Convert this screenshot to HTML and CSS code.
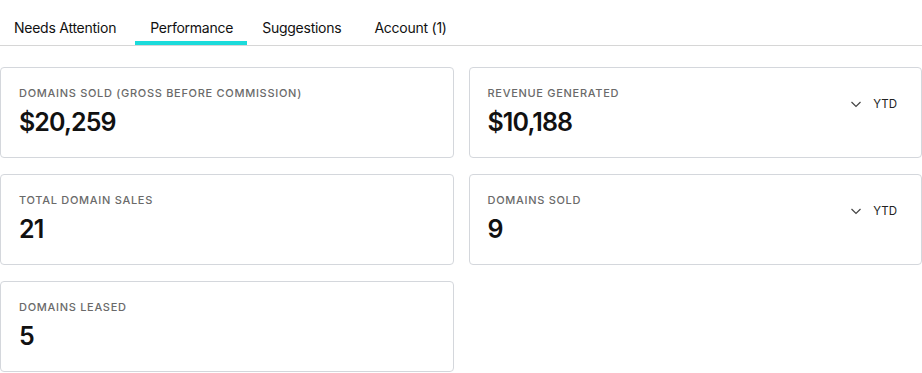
FILE: index.html
```html
<!DOCTYPE html>
<html>
<head>
<meta charset="utf-8">
<link rel="stylesheet" href="styles.css">
</head>
<body>
<div class="page">
  <nav class="tabs">
    <div class="tab">Needs Attention</div>
    <div class="tab active">Performance</div>
    <div class="tab">Suggestions</div>
    <div class="tab">Account (1)</div>
  </nav>
  <div class="grid">
    <div class="card">
      <div class="info">
        <div class="label">Domains Sold (Gross Before Commission)</div>
        <div class="value">$20,259</div>
      </div>
    </div>
    <div class="card">
      <div class="info">
        <div class="label">Revenue Generated</div>
        <div class="value">$10,188</div>
      </div>
      <div class="period">
        <svg width="12" height="12" viewBox="0 0 12 12"><path d="M1.5 4 L6 8.5 L10.5 4" fill="none" stroke="#444" stroke-width="1.2"/></svg>
        <span>YTD</span>
      </div>
    </div>
    <div class="card">
      <div class="info">
        <div class="label">Total Domain Sales</div>
        <div class="value">21</div>
      </div>
    </div>
    <div class="card">
      <div class="info">
        <div class="label">Domains Sold</div>
        <div class="value">9</div>
      </div>
      <div class="period">
        <svg width="12" height="12" viewBox="0 0 12 12"><path d="M1.5 4 L6 8.5 L10.5 4" fill="none" stroke="#444" stroke-width="1.2"/></svg>
        <span>YTD</span>
      </div>
    </div>
    <div class="card">
      <div class="info">
        <div class="label">Domains Leased</div>
        <div class="value">5</div>
      </div>
    </div>
  </div>
</div>
</body>
</html>
```

FILE: styles.css
```css
* { box-sizing: border-box; }
html, body { margin: 0; padding: 0; background: #fff; }
body {
  font-family: Inter, "Noto Sans", "Liberation Sans", sans-serif;
  color: #111;
}
.page { width: 922px; }
.tabs {
  display: flex;
  gap: 5px;
  border-bottom: 1px solid #d6d6d6;
  height: 46px;
}
.tab {
  padding: 0 14px;
  font-size: 14px;
  letter-spacing: -0.25px;
  line-height: 18px;
  padding-top: 19px;
  height: 45px;
  color: #111;
  border-bottom: 4px solid transparent;
}
.tab.active {
  border-bottom-color: #1bdbdb;
  padding: 19px 14px 0 15px;
  margin-right: -4px;
}
.grid {
  display: grid;
  grid-template-columns: 1fr 1fr;
  column-gap: 15px;
  row-gap: 16px;
  padding-top: 21px;
}
.card {
  border: 1px solid #d4d7dc;
  border-radius: 4px;
  height: 91px;
  padding: 18px 18px 0 18px;
  display: flex;
  justify-content: space-between;
  align-items: flex-start;
}
.label {
  font-size: 11px;
  line-height: 14px;
  letter-spacing: 0.7px;
  text-transform: uppercase;
  color: #6a6a6a;
  font-weight: 500;
}
.value {
  font-size: 25px;
  letter-spacing: -0.9px;
  line-height: 32px;
  font-weight: 600;
  color: #111;
  margin-top: 6px;
}
.period {
  display: flex;
  align-items: center;
  gap: 11px;
  margin-top: 11px;
  margin-right: 6px;
  font-size: 11.5px;
  color: #222;
}
```
